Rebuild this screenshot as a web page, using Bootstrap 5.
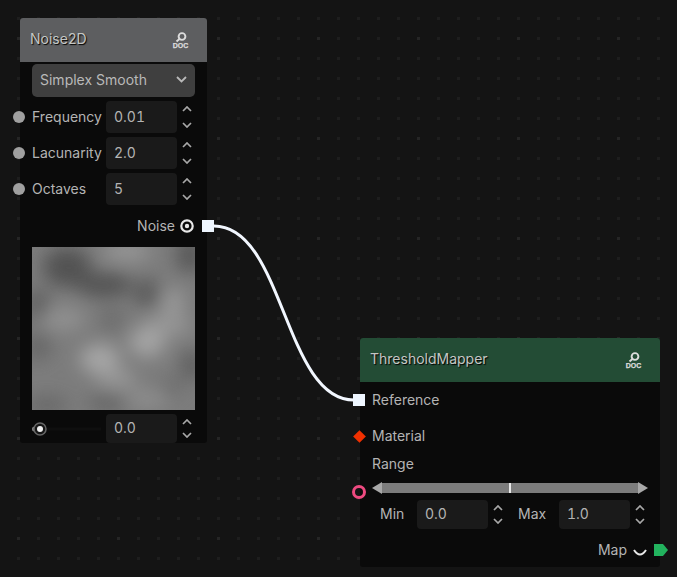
<!DOCTYPE html>
<html lang="en">
<head>
    <meta charset="UTF-8" />
    <title>Node Editor</title>
    <link rel="stylesheet" href="https://cdn.jsdelivr.net/npm/bootstrap@5.3.0/dist/css/bootstrap.min.css" />
    <style>
        html, body { height: 100%; background: #141414; overflow: hidden; }
        body { font-family: Inter, "Liberation Sans", sans-serif; font-size: 14px; color: #b4b4b4; }
        .graph { position: relative; width: 677px; height: 577px; overflow: hidden; }
        .graph-bg { position: absolute; left: 0; top: 0; }
        .node-box { position: absolute; background: #0a0a0a; border-radius: 3px; }
        .node-noise { left: 20px; top: 18px; width: 187px; height: 425px; }
        .node-mapper { left: 360px; top: 338px; width: 300px; height: 229px; }
        .node-head { height: 44px; padding: 0 10px; border-radius: 3px 3px 0 0; color: #c4c6c4; text-shadow: 1px 1px 1px #000; }
        .node-head span { margin-bottom: 3px; }
        .doc-icon { margin-top: 2px; }
        .doc-icon text { font-family: "Liberation Sans", sans-serif; font-weight: 700; font-size: 7px; fill: #dcdcdc; stroke: #dcdcdc; stroke-width: .25px; text-shadow: none; }
        .head-grey { background: #5d5e60; }
        .head-green { background: #234c35; }
        .node-inner { padding: 2px 12px 0; }
        .mode-select { height: 33px; padding: 0 8px 2px; background: #3f3f3f; border: 0; border-radius: 5px; color: #b9b9b9; font-size: 14px; margin-bottom: 2px; }
        .mode-select:hover { background: #3f3f3f; color: #b9b9b9; }
        .prop-row { height: 36px; position: relative; }
        .prop-row > span:not(.socket) { margin-bottom: 2px; }
        .row-output { height: 38px; }
        .row-indent { padding-left: 12px; }
        .prop-label { width: 74px; flex-shrink: 0; white-space: nowrap; }
        .form-control.num-field { width: 71px; height: 32px; flex-shrink: 0; min-height: 0; padding: 0 8px 2px; background: #1a1a1a; border: 0; border-radius: 4px; color: #b4b4b4; font-size: 14px; font-variant-numeric: tabular-nums; box-shadow: none; }
        .form-control.num-short { height: 29px; }
        .spin { width: 20px; flex-shrink: 0; gap: 10px; }
        .spin-short { gap: 7px; }
        .socket { position: absolute; }
        .sock-round { left: -19px; top: 12px; width: 12px; height: 12px; border-radius: 50%; background: #a0a0a0; }
        .sock-out { left: 170px; top: 13px; width: 12px; height: 12px; background: #eef6ff; }
        .sock-in { left: -7px; top: 12px; width: 12px; height: 12px; background: #eef6ff; }
        .sock-diamond { left: -5.5px; top: 13.5px; width: 9px; height: 9px; background: #f03000; transform: rotate(45deg); }
        .sock-ring { left: -8px; top: 147px; width: 14px; height: 14px; border: 3px solid #ee4a80; border-radius: 50%; }
        .sock-map { left: 294px; top: 206px; }
        .eye-icon { margin-left: 5px; margin-right: 1px; }
        .preview-box { display: block; margin-top: 2px; }
        .slide-row { height: 33px; padding-top: 4px; }
        .mini-track { width: 74px; height: 22px; flex-shrink: 0; }
        .range-label { height: 20px; line-height: 20px; padding-left: 12px; }
        .range-row { height: 26px; padding-left: 12px; padding-top: 2px; }
        .min-row { padding-left: 20px; }
        .min-label { width: 37px; flex-shrink: 0; margin-bottom: 2px; }
        .max-label { width: 41px; flex-shrink: 0; margin-left: 10px; margin-bottom: 2px; }
        .map-row { height: 38px; padding-top: 3px; }
        .map-icon { margin-left: 6px; margin-right: 13px; margin-top: 6px; }
    </style>
</head>
<body>

<div class="graph">
    <svg class="graph-bg" width="677" height="577">
        <defs>
            <pattern id="dots" x="17" y="17" width="20" height="20" patternUnits="userSpaceOnUse">
                <rect width="3" height="3" fill="#1e1e1e"/>
            </pattern>
            <pattern id="bigdots" x="17" y="37" width="100" height="100" patternUnits="userSpaceOnUse">
                <rect width="3" height="3" fill="#262626"/>
            </pattern>
        </defs>
        <rect width="677" height="577" fill="url(#dots)"/>
        <rect width="677" height="577" fill="url(#bigdots)"/>
        <path d="M214 226 C 284 226, 284 400, 354 400" fill="none" stroke="#f2f7ff" stroke-width="3"/>
    </svg>

    <!-- noise node -->
    <div class="node-box node-noise">
        <div class="node-head head-grey d-flex align-items-center justify-content-between">
            <span>Noise2D</span>
            <svg class="doc-icon me-2" width="18" height="20" viewBox="0 0 18 20">
                <circle cx="11" cy="5.5" r="3.4" fill="none" stroke="#dcdcdc" stroke-width="1.9"/>
                <path d="M8.5 8 L5.5 10.5" stroke="#dcdcdc" stroke-width="2"/>
                <text x="9.5" y="17" text-anchor="middle">DOC</text>
            </svg>
        </div>
        <div class="node-inner">
            <button class="btn mode-select w-100 d-flex align-items-center justify-content-between">
                <span>Simplex Smooth</span>
                <svg width="11" height="7" viewBox="0 0 11 7"><path d="M1 1 L5.5 5.5 L10 1" fill="none" stroke="#b9b9b9" stroke-width="1.8"/></svg>
            </button>

            <div class="prop-row d-flex align-items-center">
                <span class="socket sock-round"></span>
                <span class="prop-label">Frequency</span>
                <input class="form-control num-field" value="0.01" />
                <div class="spin d-flex flex-column align-items-center">
                    <svg width="10" height="6" viewBox="0 0 10 6"><path d="M1 5 L5 1 L9 5" fill="none" stroke="#a8a8a8" stroke-width="1.7"/></svg>
                    <svg width="10" height="6" viewBox="0 0 10 6"><path d="M1 1 L5 5 L9 1" fill="none" stroke="#a8a8a8" stroke-width="1.7"/></svg>
                </div>
            </div>
            <div class="prop-row d-flex align-items-center">
                <span class="socket sock-round"></span>
                <span class="prop-label">Lacunarity</span>
                <input class="form-control num-field" value="2.0" />
                <div class="spin d-flex flex-column align-items-center">
                    <svg width="10" height="6" viewBox="0 0 10 6"><path d="M1 5 L5 1 L9 5" fill="none" stroke="#a8a8a8" stroke-width="1.7"/></svg>
                    <svg width="10" height="6" viewBox="0 0 10 6"><path d="M1 1 L5 5 L9 1" fill="none" stroke="#a8a8a8" stroke-width="1.7"/></svg>
                </div>
            </div>
            <div class="prop-row d-flex align-items-center">
                <span class="socket sock-round"></span>
                <span class="prop-label">Octaves</span>
                <input class="form-control num-field" value="5" />
                <div class="spin d-flex flex-column align-items-center">
                    <svg width="10" height="6" viewBox="0 0 10 6"><path d="M1 5 L5 1 L9 5" fill="none" stroke="#a8a8a8" stroke-width="1.7"/></svg>
                    <svg width="10" height="6" viewBox="0 0 10 6"><path d="M1 1 L5 5 L9 1" fill="none" stroke="#a8a8a8" stroke-width="1.7"/></svg>
                </div>
            </div>
            <div class="prop-row row-output d-flex align-items-center justify-content-end">
                <span>Noise</span>
                <svg class="eye-icon" width="14" height="14" viewBox="0 0 14 14"><circle cx="7" cy="7" r="5.7" fill="none" stroke="#e8e8e8" stroke-width="2.2"/><circle cx="7" cy="7" r="2.2" fill="#e8e8e8"/></svg>
                <span class="socket sock-out"></span>
            </div>

            <svg class="preview-box" width="163" height="163" viewBox="0 0 163 163">
                <defs>
                    <filter id="soft" x="-20%" y="-20%" width="140%" height="140%"><feGaussianBlur stdDeviation="9"/></filter>
                    <clipPath id="clipbox"><rect width="163" height="163"/></clipPath>
                </defs>
                <g clip-path="url(#clipbox)">
                    <rect width="163" height="163" fill="#7c7c7c"/>
                    <g filter="url(#soft)">
                        <ellipse cx="35" cy="20" rx="24" ry="20" fill="#525252"/>
                        <ellipse cx="72" cy="38" rx="28" ry="12" fill="#525252"/>
                        <ellipse cx="115" cy="46" rx="14" ry="14" fill="#5c5c5c"/>
                        <ellipse cx="158" cy="8" rx="14" ry="18" fill="#585858"/>
                        <ellipse cx="6" cy="58" rx="12" ry="16" fill="#606060"/>
                        <ellipse cx="6" cy="100" rx="14" ry="14" fill="#686868"/>
                        <ellipse cx="160" cy="118" rx="12" ry="16" fill="#606060"/>
                        <ellipse cx="75" cy="156" rx="20" ry="9" fill="#666666"/>
                        <ellipse cx="15" cy="158" rx="22" ry="9" fill="#686868"/>
                        <ellipse cx="140" cy="140" rx="12" ry="10" fill="#6e6e6e"/>
                        <ellipse cx="80" cy="72" rx="12" ry="14" fill="#6e6e6e"/>
                        <ellipse cx="95" cy="4" rx="24" ry="10" fill="#969696"/>
                        <ellipse cx="141" cy="55" rx="12" ry="14" fill="#989898"/>
                        <ellipse cx="135" cy="78" rx="24" ry="12" fill="#949494"/>
                        <ellipse cx="115" cy="95" rx="18" ry="15" fill="#a4a4a4"/>
                        <ellipse cx="68" cy="112" rx="20" ry="15" fill="#a6a6a6"/>
                        <ellipse cx="85" cy="132" rx="20" ry="10" fill="#969696"/>
                        <ellipse cx="31" cy="72" rx="22" ry="12" fill="#909090"/>
                        <ellipse cx="115" cy="152" rx="22" ry="9" fill="#8e8e8e"/>
                    </g>
                </g>
            </svg>

            <div class="slide-row d-flex">
                <svg class="mini-track align-self-center" viewBox="0 0 74 22">
                    <rect x="8" y="9.5" width="61" height="3" fill="#0f0f0f"/>
                    <rect x="0" y="8.5" width="8" height="5" rx="2.5" fill="#8a8a8a"/>
                    <circle cx="8" cy="11" r="6" fill="#161616" stroke="#666" stroke-width="1.5"/>
                    <circle cx="8" cy="11" r="3" fill="#f0f0f0"/>
                </svg>
                <input class="form-control num-field num-short" value="0.0" />
                <div class="spin spin-short d-flex flex-column align-items-center justify-content-center">
                    <svg width="10" height="6" viewBox="0 0 10 6"><path d="M1 5 L5 1 L9 5" fill="none" stroke="#a8a8a8" stroke-width="1.7"/></svg>
                    <svg width="10" height="6" viewBox="0 0 10 6"><path d="M1 1 L5 5 L9 1" fill="none" stroke="#a8a8a8" stroke-width="1.7"/></svg>
                </div>
            </div>
        </div>
    </div>

    <!-- threshold node -->
    <div class="node-box node-mapper">
        <div class="node-head head-green d-flex align-items-center justify-content-between">
            <span>ThresholdMapper</span>
            <svg class="doc-icon me-2" width="18" height="20" viewBox="0 0 18 20">
                <circle cx="11" cy="5.5" r="3.4" fill="none" stroke="#dcdcdc" stroke-width="1.9"/>
                <path d="M8.5 8 L5.5 10.5" stroke="#dcdcdc" stroke-width="2"/>
                <text x="9.5" y="17" text-anchor="middle">DOC</text>
            </svg>
        </div>
        <div class="prop-row row-indent d-flex align-items-center">
            <span class="socket sock-in"></span>
            <span>Reference</span>
        </div>
        <div class="prop-row row-indent d-flex align-items-center">
            <span class="socket sock-diamond"></span>
            <span>Material</span>
        </div>
        <div class="range-label">Range</div>
        <span class="socket sock-ring"></span>
        <div class="range-row d-flex align-items-center">
            <svg width="276" height="12" viewBox="0 0 276 12">
                <rect x="10" y="1" width="256" height="10" fill="#7c7c7c"/>
                <rect x="137" y="1" width="2" height="10" fill="#e8e8e8"/>
                <path d="M0 6 L10 0 L10 12 Z" fill="#a8a8a8"/>
                <path d="M276 6 L266 0 L266 12 Z" fill="#a8a8a8"/>
            </svg>
        </div>
        <div class="min-row d-flex align-items-center">
            <span class="min-label">Min</span>
            <input class="form-control num-field num-short" value="0.0" />
            <div class="spin spin-short d-flex flex-column align-items-center">
                <svg width="10" height="6" viewBox="0 0 10 6"><path d="M1 5 L5 1 L9 5" fill="none" stroke="#a8a8a8" stroke-width="1.7"/></svg>
                <svg width="10" height="6" viewBox="0 0 10 6"><path d="M1 1 L5 5 L9 1" fill="none" stroke="#a8a8a8" stroke-width="1.7"/></svg>
            </div>
            <span class="max-label">Max</span>
            <input class="form-control num-field num-short" value="1.0" />
            <div class="spin spin-short d-flex flex-column align-items-center">
                <svg width="10" height="6" viewBox="0 0 10 6"><path d="M1 5 L5 1 L9 5" fill="none" stroke="#a8a8a8" stroke-width="1.7"/></svg>
                <svg width="10" height="6" viewBox="0 0 10 6"><path d="M1 1 L5 5 L9 1" fill="none" stroke="#a8a8a8" stroke-width="1.7"/></svg>
            </div>
        </div>
        <div class="map-row d-flex align-items-center justify-content-end">
            <span>Map</span>
            <svg class="map-icon" width="14" height="8" viewBox="0 0 14 8"><path d="M1 1 Q7 10 13 1" fill="none" stroke="#e8e8e8" stroke-width="2"/></svg>
        </div>
        <svg class="socket sock-map" width="14" height="12" viewBox="0 0 14 12"><path d="M0 0 H9 L14 6 L9 12 H0 Z" fill="#22b35e"/></svg>
    </div>
</div>

<script src="https://cdn.jsdelivr.net/npm/bootstrap@5.3.0/dist/js/bootstrap.bundle.min.js"></script>
</body>
</html>
